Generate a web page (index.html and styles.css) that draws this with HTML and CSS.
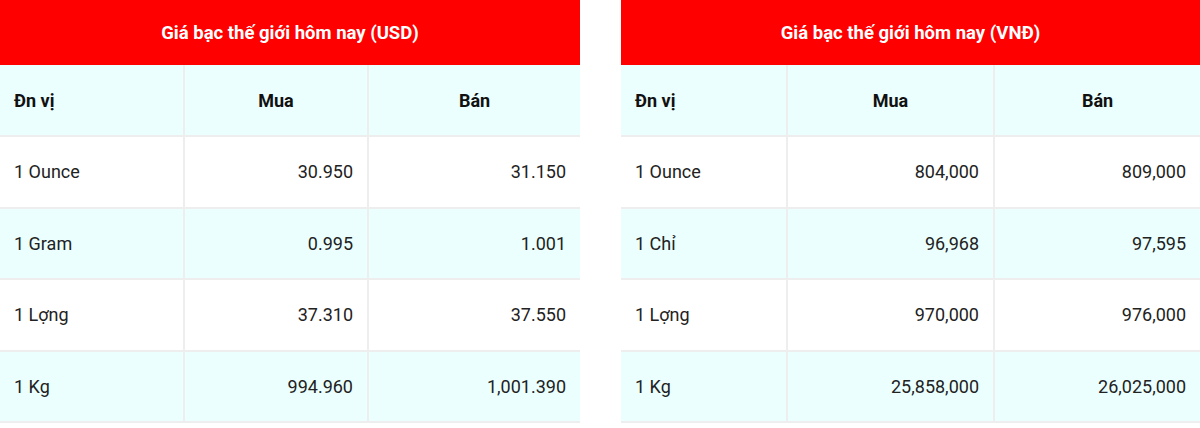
FILE: index.html
```html
<!DOCTYPE html>
<html lang="vi">
<head>
<meta charset="utf-8">
<title>Giá bạc</title>
<link rel="stylesheet" href="styles.css">
</head>
<body>
<div class="wrap">
  <table class="price usd">
    <colgroup><col class="c1"><col class="c2"><col class="c3"></colgroup>
    <thead>
      <tr class="title"><th colspan="3">Giá bạc thế giới hôm nay (USD)</th></tr>
      <tr class="head"><th class="l">Đn vị</th><th>Mua</th><th>Bán</th></tr>
    </thead>
    <tbody>
      <tr><td class="l">1 Ounce</td><td>30.950</td><td>31.150</td></tr>
      <tr class="alt"><td class="l">1 Gram</td><td>0.995</td><td>1.001</td></tr>
      <tr><td class="l">1 Lợng</td><td>37.310</td><td>37.550</td></tr>
      <tr class="alt"><td class="l">1 Kg</td><td>994.960</td><td>1,001.390</td></tr>
    </tbody>
  </table>
  <table class="price vnd">
    <colgroup><col class="c1"><col class="c2"><col class="c3"></colgroup>
    <thead>
      <tr class="title"><th colspan="3">Giá bạc thế giới hôm nay (VNĐ)</th></tr>
      <tr class="head"><th class="l">Đn vị</th><th>Mua</th><th>Bán</th></tr>
    </thead>
    <tbody>
      <tr><td class="l">1 Ounce</td><td>804,000</td><td>809,000</td></tr>
      <tr class="alt"><td class="l">1 Chỉ</td><td>96,968</td><td>97,595</td></tr>
      <tr><td class="l">1 Lợng</td><td>970,000</td><td>976,000</td></tr>
      <tr class="alt"><td class="l">1 Kg</td><td>25,858,000</td><td>26,025,000</td></tr>
    </tbody>
  </table>
</div>
</body>
</html>
```
FILE: styles.css
```css
html, body {
  margin: 0;
  padding: 0;
  background: #fff;
}
body {
  font-family: Roboto, "Noto Sans", "Liberation Sans", sans-serif;
  color: #222;
}
.wrap {
  display: flex;
  gap: 41px;
  align-items: flex-start;
}
.price {
  border-collapse: separate;
  border-spacing: 0;
  table-layout: fixed;
  font-size: 18px;
}
.usd { width: 580px; }
.vnd { width: 579px; }
.usd .c1 { width: 185px; }
.usd .c2 { width: 184px; }
.usd .c3 { width: 211px; }
.vnd .c1 { width: 167px; }
.vnd .c2 { width: 207px; }
.vnd .c3 { width: 205px; }

.price th, .price td {
  box-sizing: border-box;
  padding: 0 14px;
  text-align: right;
  vertical-align: middle;
  border-right: 2px solid #eeeeee;
  border-bottom: 2px solid #eeeeee;
  height: 71.6px;
}
.price th:last-child, .price td:last-child {
  border-right: none;
}
.price .l { text-align: left; }

.title th {
  background: #ff0000;
  color: #fff;
  font-weight: 700;
  font-size: 18.5px;
  text-align: center;
  height: 65px;
  border: none;
}
.head th {
  background: #ebffff;
  color: #111;
  font-weight: 700;
  text-align: center;
  height: 72px;
}
.head th.l { text-align: left; }
.alt td { background: #ebffff; }
```
